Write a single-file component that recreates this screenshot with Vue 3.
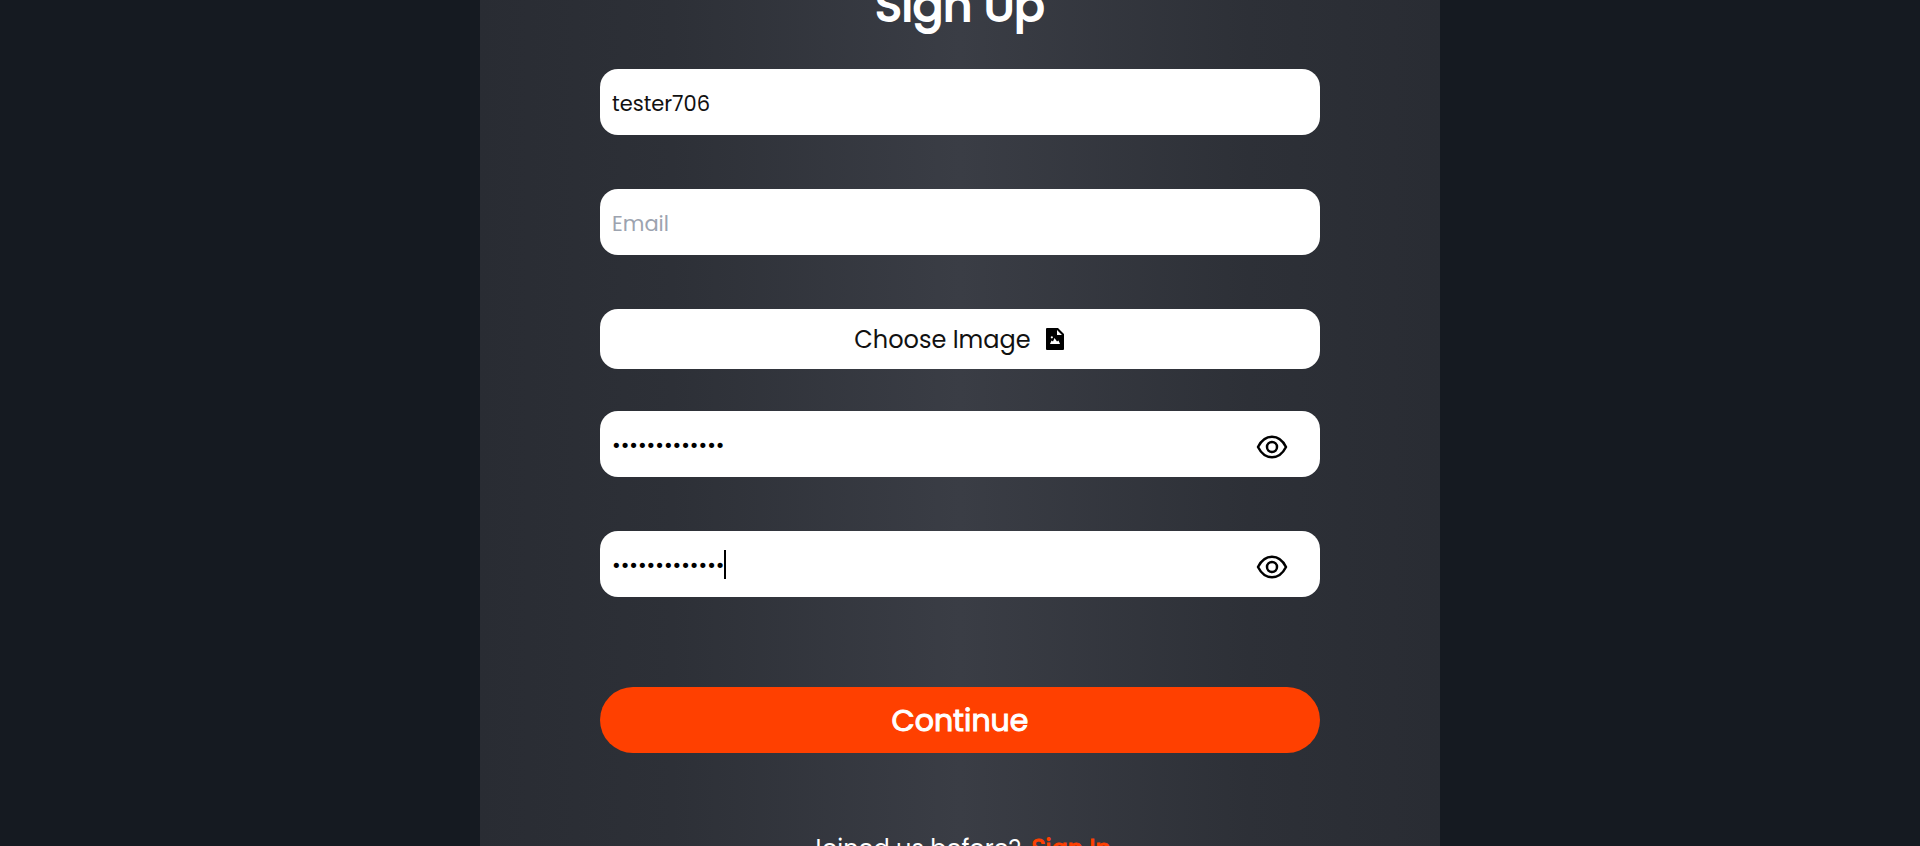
<script setup>
import { ref } from 'vue'

const username = ref('tester706')
const email = ref('')
const password = ref('testerpass706')
const confirmation = ref('testerpass706')
const showPassword = ref(false)
const showConfirmation = ref(false)
</script>

<template>
  <main class="page">
    <form class="card" @submit.prevent>
      <h1 class="title">Sign Up</h1>

      <div class="field">
        <input v-model="username" class="input" type="text" placeholder="Username" aria-label="Username" />
      </div>

      <div class="field">
        <input v-model="email" class="input" type="email" placeholder="Email" aria-label="Email" />
      </div>

      <button class="choose" type="button">
        <span>Choose Image</span>
        <svg class="file-icon" viewBox="0 0 18 22" aria-hidden="true">
          <path fill="#000" fill-rule="evenodd" d="M1 0H12L18 6V21Q18 22 17 22H1Q0 22 0 21V1Q0 0 1 0ZM11 2V7H16ZM4 16H14L12.500 12.500L11 13.500L8.500 10L7 13.500L5.500 12.500ZM5.800 8.200a1.100 1.100 0 1 0 .1 0Z" />
        </svg>
      </button>

      <div class="field">
        <input v-model="password" class="input" :type="showPassword ? 'text' : 'password'" placeholder="Password" aria-label="Password" />
        <button class="eye" type="button" aria-label="Show password" @click="showPassword = !showPassword">
          <svg viewBox="0 0 32 24" aria-hidden="true">
            <path d="M2 12C5.500 5 10 1.800 16 1.800S26.500 5 30 12C26.500 19 22 22.200 16 22.200S5.500 19 2 12Z" />
            <circle cx="16" cy="12" r="5" />
          </svg>
        </button>
      </div>

      <div class="field">
        <input v-model="confirmation" class="input" :type="showConfirmation ? 'text' : 'password'" placeholder="Confirm password" aria-label="Confirm password" />
        <span class="caret" aria-hidden="true"></span>
        <button class="eye" type="button" aria-label="Show confirmation" @click="showConfirmation = !showConfirmation">
          <svg viewBox="0 0 32 24" aria-hidden="true">
            <path d="M2 12C5.500 5 10 1.800 16 1.800S26.500 5 30 12C26.500 19 22 22.200 16 22.200S5.500 19 2 12Z" />
            <circle cx="16" cy="12" r="5" />
          </svg>
        </button>
      </div>

      <button class="submit" type="submit">Continue</button>

      <p class="footer">Joined us before? <a class="link" href="#">Sign In</a></p>
    </form>
  </main>
</template>

<style>
body {
  margin: 0;
  background: #151a21;
}
</style>

<style scoped>
.page {
  display: flex;
  justify-content: center;
  height: 100vh;
  overflow: hidden;
  background: #151a21;
  font-family: Poppins, Inter, "Open Sans", sans-serif;
}

.card {
  display: flex;
  flex-direction: column;
  align-items: center;
  align-self: flex-start;
  box-sizing: border-box;
  width: 50%;
  margin-top: -31px;
  padding-bottom: 60px;
  background: linear-gradient(90deg, #292c33 0%, #2d3037 20%, #3a3d45 50%, #2d3037 80%, #292c33 100%);
}

.title {
  margin: 0 0 26px;
  color: #fff;
  font-size: 45px;
  font-weight: 400;
  line-height: 74px;
  -webkit-text-stroke: 2px #fff;
}

.field {
  position: relative;
  width: 75%;
  margin-bottom: 54px;
}

.input {
  display: block;
  box-sizing: border-box;
  width: 100%;
  height: 66px;
  padding: 2px 80px 0 12px;
  border: 0;
  border-radius: 18px;
  background: #fff;
  color: #111;
  font-family: inherit;
  font-size: 21px;
  outline: none;
}

.input::placeholder {
  color: #9ca3af;
  opacity: 1;
}

.input[type="password"] {
  color: #000;
}

.choose {
  display: flex;
  align-items: center;
  justify-content: center;
  gap: 15px;
  width: 75%;
  height: 60px;
  margin-bottom: 42px;
  padding: 0 2px 0 0;
  border: 0;
  border-radius: 18px;
  background: #fff;
  color: #111;
  font-family: inherit;
  font-size: 24px;
}

.file-icon {
  width: 18px;
  height: 22px;
}

.eye {
  position: absolute;
  top: 24px;
  right: 32px;
  width: 32px;
  height: 24px;
  padding: 0;
  border: 0;
  background: none;
}

.eye svg {
  display: block;
  width: 32px;
  height: 24px;
  fill: none;
  stroke: #000;
  stroke-width: 2.500;
  stroke-linejoin: round;
}

.caret {
  position: absolute;
  top: 19px;
  left: 124px;
  width: 2px;
  height: 29px;
  background: #000;
}

.submit {
  width: 75%;
  height: 66px;
  margin: 36px 0 78px;
  padding: 2px 0 0;
  border: 0;
  border-radius: 33px;
  background: #ff4000;
  color: #fff;
  font-family: inherit;
  font-size: 30px;
  font-weight: 400;
  -webkit-text-stroke: 1px #fff;
}

.footer {
  margin: 0;
  color: #fff;
  font-size: 24px;
  line-height: 36px;
}

.link {
  margin-left: 4px;
  color: #ff4000;
  text-decoration: none;
  -webkit-text-stroke: 1px #ff4000;
}
</style>
